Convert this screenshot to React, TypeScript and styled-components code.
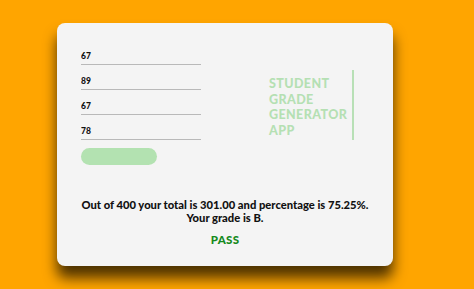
import React from 'react';
import styled, { createGlobalStyle } from 'styled-components';

const GlobalStyle = createGlobalStyle`
    html, body {
        margin: 0;
        padding: 0;
        background: #ffa500;
    }
    body {
        font-family: Lato, 'Noto Sans', sans-serif;
    }
`;

const marks = ['67', '89', '67', '78'];

export default function App() {
    return (
        <>
            <GlobalStyle />
            <Page>
                <Card>
                    <Top>
                        <Form>
                            {marks.map((m, i) => (
                                <Field key={i}>
                                    <Input defaultValue={m} />
                                </Field>
                            ))}
                            <Button type="button" />
                        </Form>
                        <Title>
                            Student
                            <br />
                            Grade
                            <br />
                            Generator
                            <br />
                            App
                        </Title>
                    </Top>
                    <Result>
                        Out of 400 your total is 301.00 and percentage is 75.25%.
                        <br />
                        Your grade is B.
                    </Result>
                    <Status>PASS</Status>
                </Card>
            </Page>
        </>
    );
}

const Page = styled.div`
    width: 474px;
    height: 289px;
    padding: 23px 0 0 57px;
    box-sizing: border-box;
    overflow: hidden;
`;

const Card = styled.div`
    width: 336px;
    height: 243px;
    box-sizing: border-box;
    background: #f4f4f4;
    border-radius: 8px;
    box-shadow: 0 12px 14px rgba(0, 0, 0, 0.7);
    padding: 15px 24px 0 24px;
`;

const Top = styled.div`
    display: flex;
    align-items: flex-start;
`;

const Form = styled.div`
    width: 120px;
    display: flex;
    flex-direction: column;
    padding-top: 2px;
`;

const Field = styled.div`
    height: 25px;
    display: flex;
    align-items: flex-end;
`;

const Input = styled.input`
    width: 120px;
    border: none;
    border-bottom: 1.5px solid #b9b9b9;
    background: transparent;
    font-family: Lato, 'Noto Sans', sans-serif;
    font-weight: 900;
    font-size: 8.5px;
    color: #111;
    padding: 0 0 3px 0;
    outline: none;
`;

const Button = styled.button`
    margin-top: 8px;
    width: 76px;
    height: 17px;
    border: none;
    border-radius: 9px;
    background: #b3e2b1;
`;

const Title = styled.div`
    margin: 32px 0 0 68px;
    padding: 6px 5px 2px 0;
    border-right: 2px solid #b8e0b6;
    font-family: Lato, 'Noto Sans', sans-serif;
    font-weight: 900;
    font-size: 12.5px;
    line-height: 15.5px;
    letter-spacing: 0.4px;
    text-transform: uppercase;
    color: #b5e0b3;
`;

const Result = styled.div`
    margin: 34px -24px 0;
    white-space: nowrap;
    text-align: center;
    font-family: Lato, 'Noto Sans', sans-serif;
    font-weight: 900;
    font-size: 11.2px;
    line-height: 12.5px;
    color: #111;
`;

const Status = styled.div`
    margin-top: 9px;
    text-align: center;
    font-family: Lato, 'Noto Sans', sans-serif;
    font-weight: 900;
    font-size: 11.5px;
    letter-spacing: 0.3px;
    color: #158a1c;
`;
